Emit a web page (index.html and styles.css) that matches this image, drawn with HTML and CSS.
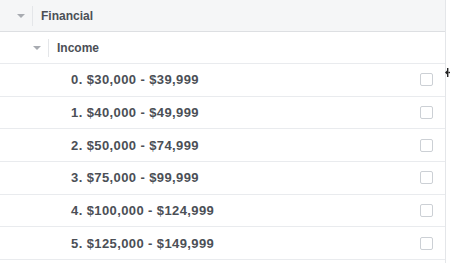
FILE: index.html
```html
<!DOCTYPE html>
<html>
<head>
<meta charset="utf-8">
<link rel="stylesheet" href="styles.css">
</head>
<body>
<div class="page">
  <div class="tree">
    <div class="row group lvl1">
      <span class="caret"></span><span class="sep"></span><span class="label">Financial</span>
    </div>
    <div class="row subgroup lvl2">
      <span class="caret"></span><span class="sep"></span><span class="label">Income</span>
    </div>
    <div class="row item"><span class="text">0. $30,000 - $39,999</span><span class="check"></span></div>
    <div class="row item"><span class="text">1. $40,000 - $49,999</span><span class="check"></span></div>
    <div class="row item"><span class="text">2. $50,000 - $74,999</span><span class="check"></span></div>
    <div class="row item"><span class="text">3. $75,000 - $99,999</span><span class="check"></span></div>
    <div class="row item"><span class="text">4. $100,000 - $124,999</span><span class="check"></span></div>
    <div class="row item"><span class="text">5. $125,000 - $149,999</span><span class="check"></span></div>
  </div>
  <div class="gutter"></div>
  <svg class="cursor" width="5" height="9" viewBox="0 0 5 9"><rect x="2" y="0" width="1.4" height="9" fill="#222"/><path d="M0 4.5 L2 2.5 L2 6.5 Z" fill="#222"/><rect x="3.4" y="3.8" width="1.6" height="1.4" fill="#222"/></svg>
</div>
</body>
</html>
```

FILE: styles.css
```css
html, body {
  margin: 0;
  padding: 0;
  background: #ffffff;
}
body {
  font-family: "Liberation Sans", Arial, sans-serif;
  color: #4b4f56;
  width: 450px;
  height: 263px;
  overflow: hidden;
}
.page {
  position: relative;
  display: flex;
  height: 263px;
}
.tree {
  width: 445px;
  border-right: 1px solid #e4e6e9;
  flex: none;
}
.gutter {
  flex: 1;
}
.row {
  display: flex;
  align-items: center;
  box-sizing: border-box;
  border-bottom: 1px solid #e9ebee;
  font-weight: bold;
}
.group {
  height: 32px;
  background: #f5f6f7;
  border-bottom-color: #dddfe2;
  padding-left: 17px;
  font-size: 12px;
}
.subgroup {
  height: 32px;
  padding-left: 33px;
  font-size: 12px;
}
.caret {
  width: 0;
  height: 0;
  border-left: 4px solid transparent;
  border-right: 4px solid transparent;
  border-top: 4px solid #a8abb1;
  margin-top: 1px;
}
.sep {
  width: 1px;
  background: #e4e6e9;
  margin-left: 7px;
  margin-right: 8px;
}
.group .sep { height: 20px; }
.subgroup .sep { height: 18px; }
.item {
  height: 32.67px;
  padding-left: 71px;
  padding-right: 12px;
  justify-content: space-between;
  font-size: 13px;
  letter-spacing: 0.4px;
}
.check {
  width: 13px;
  height: 13px;
  box-sizing: border-box;
  border: 1px solid #ccd0d5;
  border-radius: 2px;
  background: #fff;
}
.cursor {
  position: absolute;
  left: 445px;
  top: 68px;
}
```
